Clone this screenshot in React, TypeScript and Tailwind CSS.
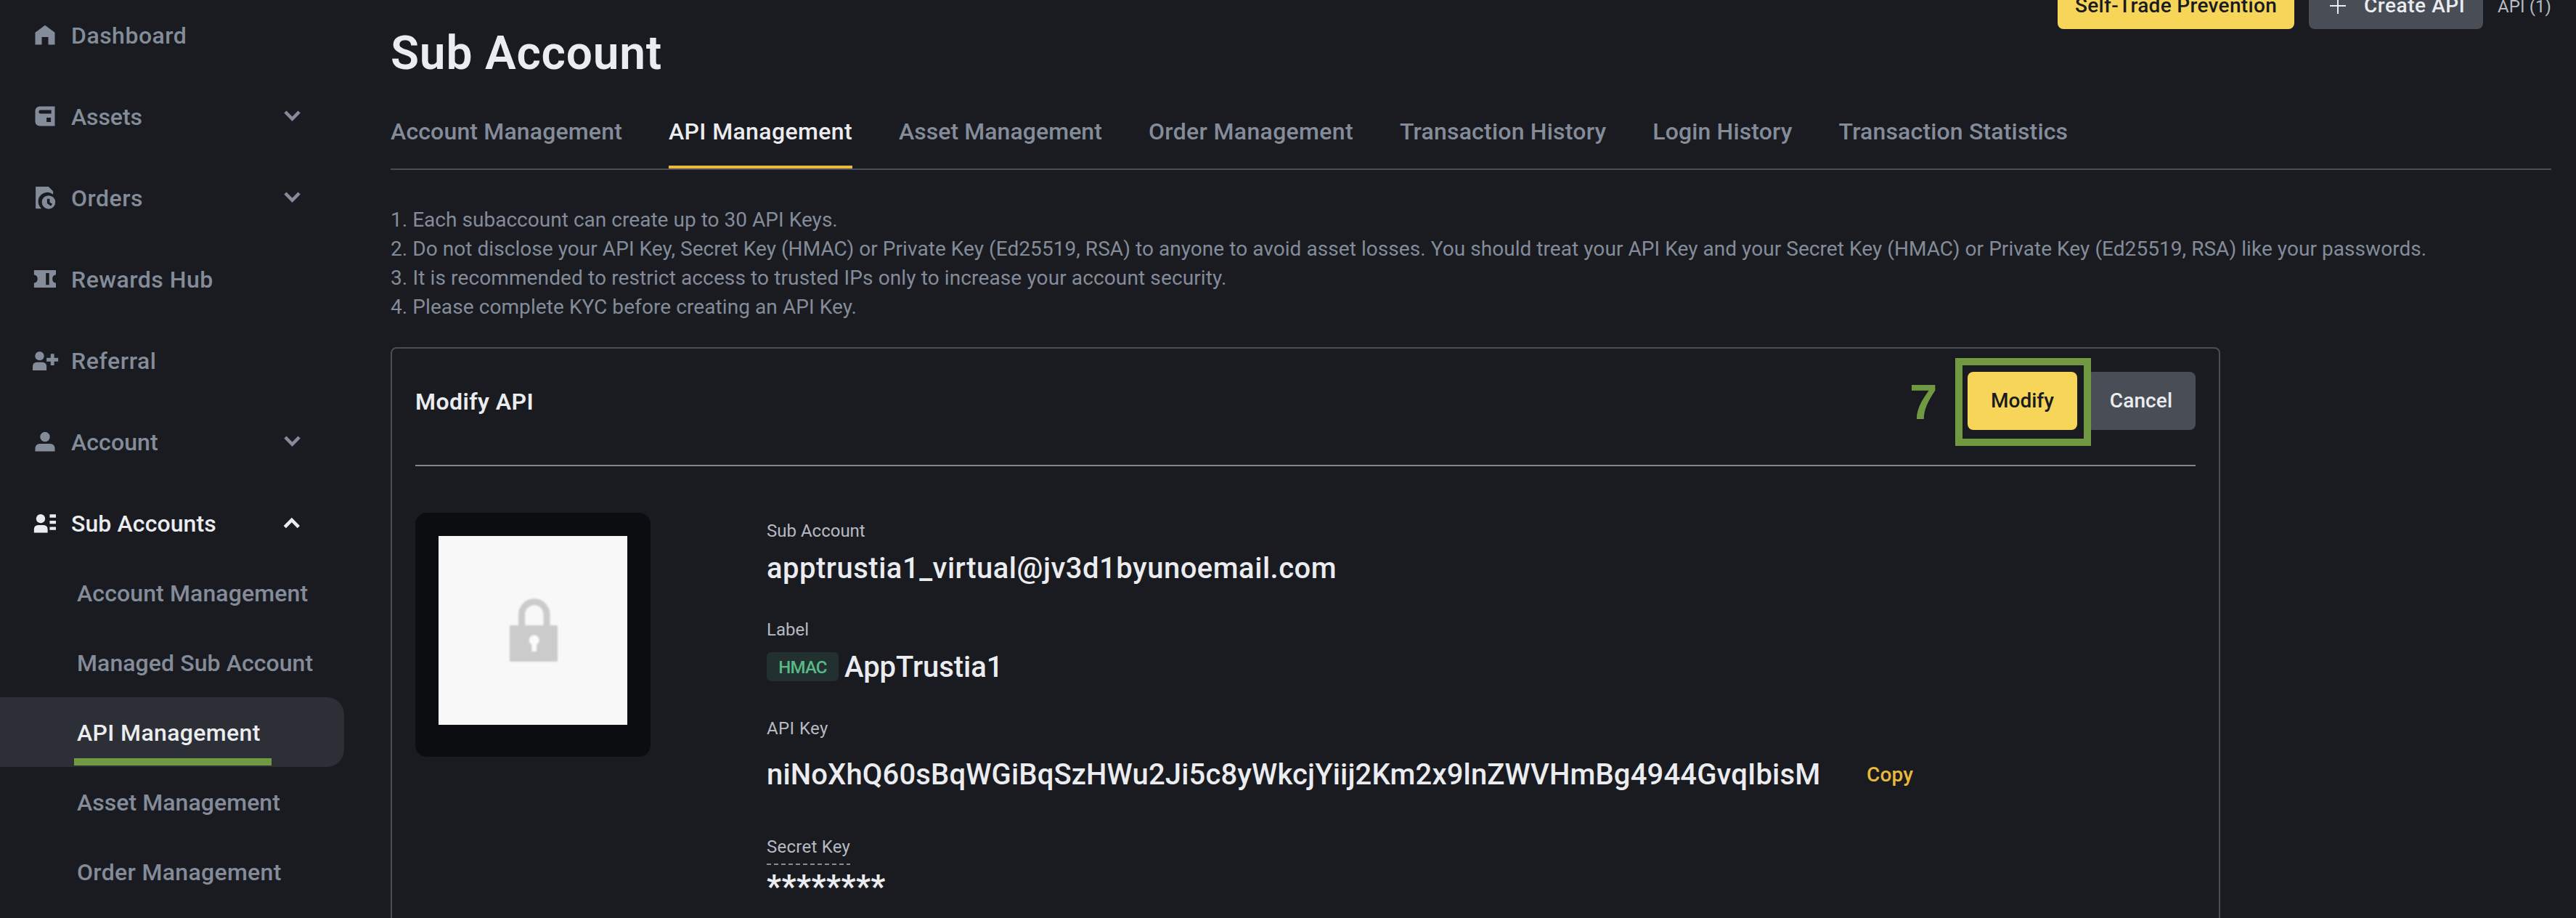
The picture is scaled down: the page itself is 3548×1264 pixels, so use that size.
import type { ReactNode } from "react";

function Icon({ children }: { children: ReactNode }) {
  return (
    <svg viewBox="0 0 24 24" className="size-9 shrink-0 overflow-visible" fill="currentColor">
      {children}
    </svg>
  );
}

const HomeIcon = () => (
  <Icon>
    <path d="M3 21V9.9L12 3.1l9 6.8V21h-6v-7H9v7z" />
  </Icon>
);

const WalletIcon = () => (
  <Icon>
    <path
      fillRule="evenodd"
      d="M21 3v18H7a4 4 0 0 1-4-4V7a4 4 0 0 1 4-4zM17.8 6.4H7.8a1.6 1.6 0 0 0 0 3.2h10zM13.4 13.4v4h4v-4z"
    />
  </Icon>
);

const OrdersIcon = () => (
  <Icon>
    <path d="M3.4 2h11.8l4.2 4.2v2.9a8.1 8.1 0 0 0-10.5 13.1H3.4z" />
    <path
      fillRule="evenodd"
      d="M15.3 10.1a6.2 6.2 0 1 1 0 12.4a6.2 6.2 0 0 1 0-12.4zM13.9 13.2v4.2l3.5 2.4 1.3-1.9-2.4-1.6v-3.1z"
    />
  </Icon>
);

const TicketIcon = () => (
  <Icon>
    <path
      fillRule="evenodd"
      d="M1.9 4H22v4.2a3.85 3.85 0 0 0 0 7.6V20H1.9v-4.2a3.85 3.85 0 0 0 0-7.6zM12.8 6.6v10.9h3V6.6z"
    />
  </Icon>
);

const ReferralIcon = () => (
  <Icon>
    <circle cx="7" cy="8.1" r="4.1" />
    <path d="M.7 21.3v-3.8a3.7 3.7 0 0 1 3.7-3.7h5.3a3.7 3.7 0 0 1 3.7 3.7v3.8z" />
    <path d="M17.2 6.2h3.2v3.6h3.7v3.3h-3.7v3.6h-3.2v-3.6h-3.8V9.8h3.8z" />
  </Icon>
);

const UserIcon = () => (
  <Icon>
    <circle cx="12" cy="7.6" r="4.5" />
    <path d="M3 21v-3a4 4 0 0 1 4-4h10a4 4 0 0 1 4 4v3z" />
  </Icon>
);

const SubAccountsIcon = () => (
  <Icon>
    <circle cx="8" cy="8.1" r="4.1" />
    <path d="M1.9 21v-3.4A3.6 3.6 0 0 1 5.5 14h5.3a3.6 3.6 0 0 1 3.6 3.6V21z" />
    <path d="M16.3 4.2H22v3h-5.7zM16.3 10H22v2.900h-5.7zM16.3 15.6H22v2.900h-5.7z" />
  </Icon>
);

function Chevron({ open }: { open?: boolean }) {
  return (
    <svg viewBox="0 0 32 32" className="ml-auto size-8" fill="none" stroke="currentColor" strokeWidth="4.6">
      <path d={open ? "M6.3 21.7 15.8 12l9.5 9.7" : "M6.9 10l9.6 9.8L26.1 10"} />
    </svg>
  );
}

type Item = { icon: ReactNode; text: string; track: string; expand?: boolean; open?: boolean };

const items: Item[] = [
  { icon: <HomeIcon />, text: "Dashboard", track: "tracking-[0.5px]" },
  { icon: <WalletIcon />, text: "Assets", track: "tracking-[-0.1px]", expand: true },
  { icon: <OrdersIcon />, text: "Orders", track: "tracking-[0.5px]", expand: true },
  { icon: <TicketIcon />, text: "Rewards Hub", track: "tracking-[0.5px]" },
  { icon: <ReferralIcon />, text: "Referral", track: "tracking-[0.6px]" },
  { icon: <UserIcon />, text: "Account", track: "tracking-[0.1px]", expand: true },
  { icon: <SubAccountsIcon />, text: "Sub Accounts", track: "tracking-[0.1px]", expand: true, open: true },
];

const subItems = [
  { text: "Account Management", track: "tracking-[0.12px]" },
  { text: "Managed Sub Account", track: "tracking-[0.08px]" },
  { text: "API Management", track: "tracking-[0.36px]", active: true },
  { text: "Asset Management", track: "tracking-[0.06px]" },
  { text: "Order Management", track: "tracking-[0.32px]" },
];

const tabs = [
  { text: "Account Management", track: "tracking-[0.16px]" },
  { text: "API Management", track: "tracking-[0.38px]", active: true },
  { text: "Asset Management", track: "tracking-[0.06px]" },
  { text: "Order Management", track: "tracking-[0.34px]" },
  { text: "Transaction History", track: "tracking-[0.21px]" },
  { text: "Login History", track: "tracking-[0.13px]" },
  { text: "Transaction Statistics", track: "tracking-[0.17px]" },
];

function Sidebar() {
  return (
    <aside className="flex w-[474px] shrink-0 flex-col text-[32px] font-medium text-[#848c9a]">
      <nav className="-mt-2 flex flex-col">
        {items.map((i) => (
          <div
            key={i.text}
            className={`flex h-28 items-center pr-14 pl-11 ${i.open ? "text-[#ebecf0]" : ""}`}
          >
            {i.icon}
            <span className={`ml-[18px] pt-0.5 ${i.track}`}>{i.text}</span>
            {i.expand && <Chevron open={i.open} />}
          </div>
        ))}
      </nav>
      <nav className="-mt-2 flex flex-col">
        {subItems.map((i) => (
          <div
            key={i.text}
            className={`relative flex h-24 items-center pl-[106px] ${
              i.active ? "rounded-r-3xl bg-[#2c3036] text-[#ebecf0]" : ""
            }`}
          >
            <span className={`pt-0.5 whitespace-nowrap ${i.track}`}>{i.text}</span>
            {i.active && <span className="absolute bottom-0.5 left-[102px] h-2.5 w-[272px] bg-[#719942]" />}
          </div>
        ))}
      </nav>
    </aside>
  );
}

function TopActions() {
  return (
    <div className="-mt-6 flex h-16 shrink-0 items-center justify-end text-[28px] font-medium">
      <button className="flex h-16 w-[326px] items-center justify-center rounded-lg bg-[#f6d559] tracking-[0.32px] whitespace-nowrap text-[#191b20]">
        Self-Trade Prevention
      </button>
      <button className="ml-5 flex h-16 w-60 items-center rounded-lg bg-[#494d56] pl-[29px] tracking-[0.55px] whitespace-nowrap text-[#ebecf0]">
        <svg viewBox="0 0 22 22" className="mr-[25px] size-[22px]" stroke="currentColor" strokeWidth="2">
          <path d="M11 0v22M0 11h22" />
        </svg>
        Create API
      </button>
      <span className="ml-5 w-[74px] pt-0.5 text-2xl font-normal tracking-[0.1px] whitespace-nowrap text-[#b6bac2]">
        API (1)
      </span>
    </div>
  );
}

function KeyPicture() {
  return (
    <div className="h-[336px] w-[324px] shrink-0 rounded-2xl bg-[#0c0d11] p-8">
      <div className="flex size-[260px] bg-[#f8f8f8]">
        <svg viewBox="0 0 260 260" className="size-[260px]">
          <g className="blur-[1px]">
            <path d="M114.6 126v-18a17.2 17.2 0 0 1 34.4 0v18" fill="none" stroke="#cbcbcb" strokeWidth="9" />
            <rect x="98" y="123" width="66" height="50" rx="1.5" fill="#cbcbcb" />
            <circle cx="131.7" cy="143.5" r="7" fill="#fbfbfb" />
            <rect x="128.3" y="146" width="6.8" height="13" rx="1" fill="#fbfbfb" />
          </g>
        </svg>
      </div>
    </div>
  );
}

function Details() {
  return (
    <div className="ml-40 flex flex-col items-start pt-[7px] text-[40px] leading-[56px] font-medium whitespace-nowrap text-[#ebecf0]">
      <span className="text-2xl leading-9 font-normal text-[#b6bac2]">Sub Account</span>
      <span className="mt-1.5 tracking-[0.5px]">apptrustia1_virtual@jv3d1byunoemail.com</span>

      <span className="mt-[38px] text-2xl leading-9 font-normal text-[#b6bac2]">Label</span>
      <div className="mt-[5px] flex h-14 items-center">
        <span className="flex h-10 w-[99px] items-center justify-center rounded-md bg-[#22302f] pt-px text-2xl tracking-[-0.8px] text-[#58b987]">
          HMAC
        </span>
        <span className="ml-2 pt-0.5 tracking-[-0.05px]">AppTrustia1</span>
      </div>

      <span className="mt-[39px] text-2xl leading-9 font-normal tracking-[0.4px] text-[#b6bac2]">API Key</span>
      <div className="mt-[18px] flex h-14 items-center">
        <span className="w-[1515px] tracking-[0.14px]">
          niNoXhQ60sBqWGiBqSzHWu2Ji5c8yWkcjYiij2Km2x9lnZWVHmBg4944GvqIbisM
        </span>
        <a className="text-[28px] leading-10 tracking-[0.2px] text-[#e8b93a]">Copy</a>
      </div>

      <span className="mt-[53px] text-2xl leading-9 font-normal tracking-[0.24px] text-[#b6bac2]">Secret Key</span>
      <span className="mt-[5px] h-0.5 w-[115px] bg-[repeating-linear-gradient(90deg,#848c9a_0_6px,transparent_6px_10px)]" />
      <span className="mt-0.5 text-[44px] font-bold tracking-[0.5px]">********</span>
    </div>
  );
}

function ModifyCard() {
  return (
    <section className="mt-[35px] flex h-[900px] w-[2520px] shrink-0 flex-col rounded-lg border-2 border-[#494d56] px-8">
      <header className="flex h-[162px] shrink-0 items-start justify-between border-b-2 border-[#858585] pt-8">
        <h2 className="flex h-20 items-center pt-0.5 text-[32px] font-semibold tracking-[0.45px] text-[#ebecf0]">
          Modify API
        </h2>
        <div className="relative flex gap-[13px] text-[28px] font-medium">
          <span className="absolute -top-0.5 -left-20 font-['Liberation_Sans'] text-[69px] leading-[88px] font-bold text-[#719942]">
            7
          </span>
          <button className="h-20 w-[151px] rounded-lg bg-[#f6d559] text-[#191b20]">Modify</button>
          <button className="h-20 w-[150px] rounded-lg bg-[#494d56] tracking-[0.1px] text-[#ebecf0]">Cancel</button>
          <span className="absolute -top-[19px] -left-[17px] h-[121px] w-[187px] border-[10px] border-[#719942]" />
        </div>
      </header>
      <div className="mt-16 flex items-start">
        <KeyPicture />
        <Details />
      </div>
    </section>
  );
}

export default function App() {
  return (
    <div className="flex h-[1264px] w-[3548px] overflow-hidden bg-[#191b20] font-['Roboto',sans-serif]">
      <Sidebar />
      <main className="ml-16 flex w-[2976px] flex-col">
        <TopActions />
        <h1 className="-mt-1.5 h-20 text-[64px] leading-[80px] font-semibold tracking-[0.8px] text-[#ebecf0]">
          Sub Account
        </h1>
        <div className="mt-[43px] flex gap-16 border-b-2 border-[#494d56] text-[32px] leading-[48px] font-medium whitespace-nowrap">
          {tabs.map((t) => (
            <a
              key={t.text}
              className={`border-b-4 pb-[23px] ${t.track} ${
                t.active ? "border-[#e8b93a] text-[#ebecf0]" : "border-transparent text-[#848c9a]"
              }`}
            >
              {t.text}
            </a>
          ))}
        </div>
        <div className="mt-[49px] text-[28px] leading-10 whitespace-nowrap text-[#848c9a]">
          <p className="tracking-[0.03px]">1. Each subaccount can create up to 30 API Keys.</p>
          <p className="tracking-[0.056px]">
            2. Do not disclose your API Key, Secret Key (HMAC) or Private Key (Ed25519, RSA) to anyone to avoid asset
            losses. You should treat your API Key and your Secret Key (HMAC) or Private Key (Ed25519, RSA) like your
            passwords.
          </p>
          <p className="tracking-[0.12px]">
            3. It is recommended to restrict access to trusted IPs only to increase your account security.
          </p>
          <p className="tracking-[0.08px]">4. Please complete KYC before creating an API Key.</p>
        </div>
        <ModifyCard />
      </main>
    </div>
  );
}
